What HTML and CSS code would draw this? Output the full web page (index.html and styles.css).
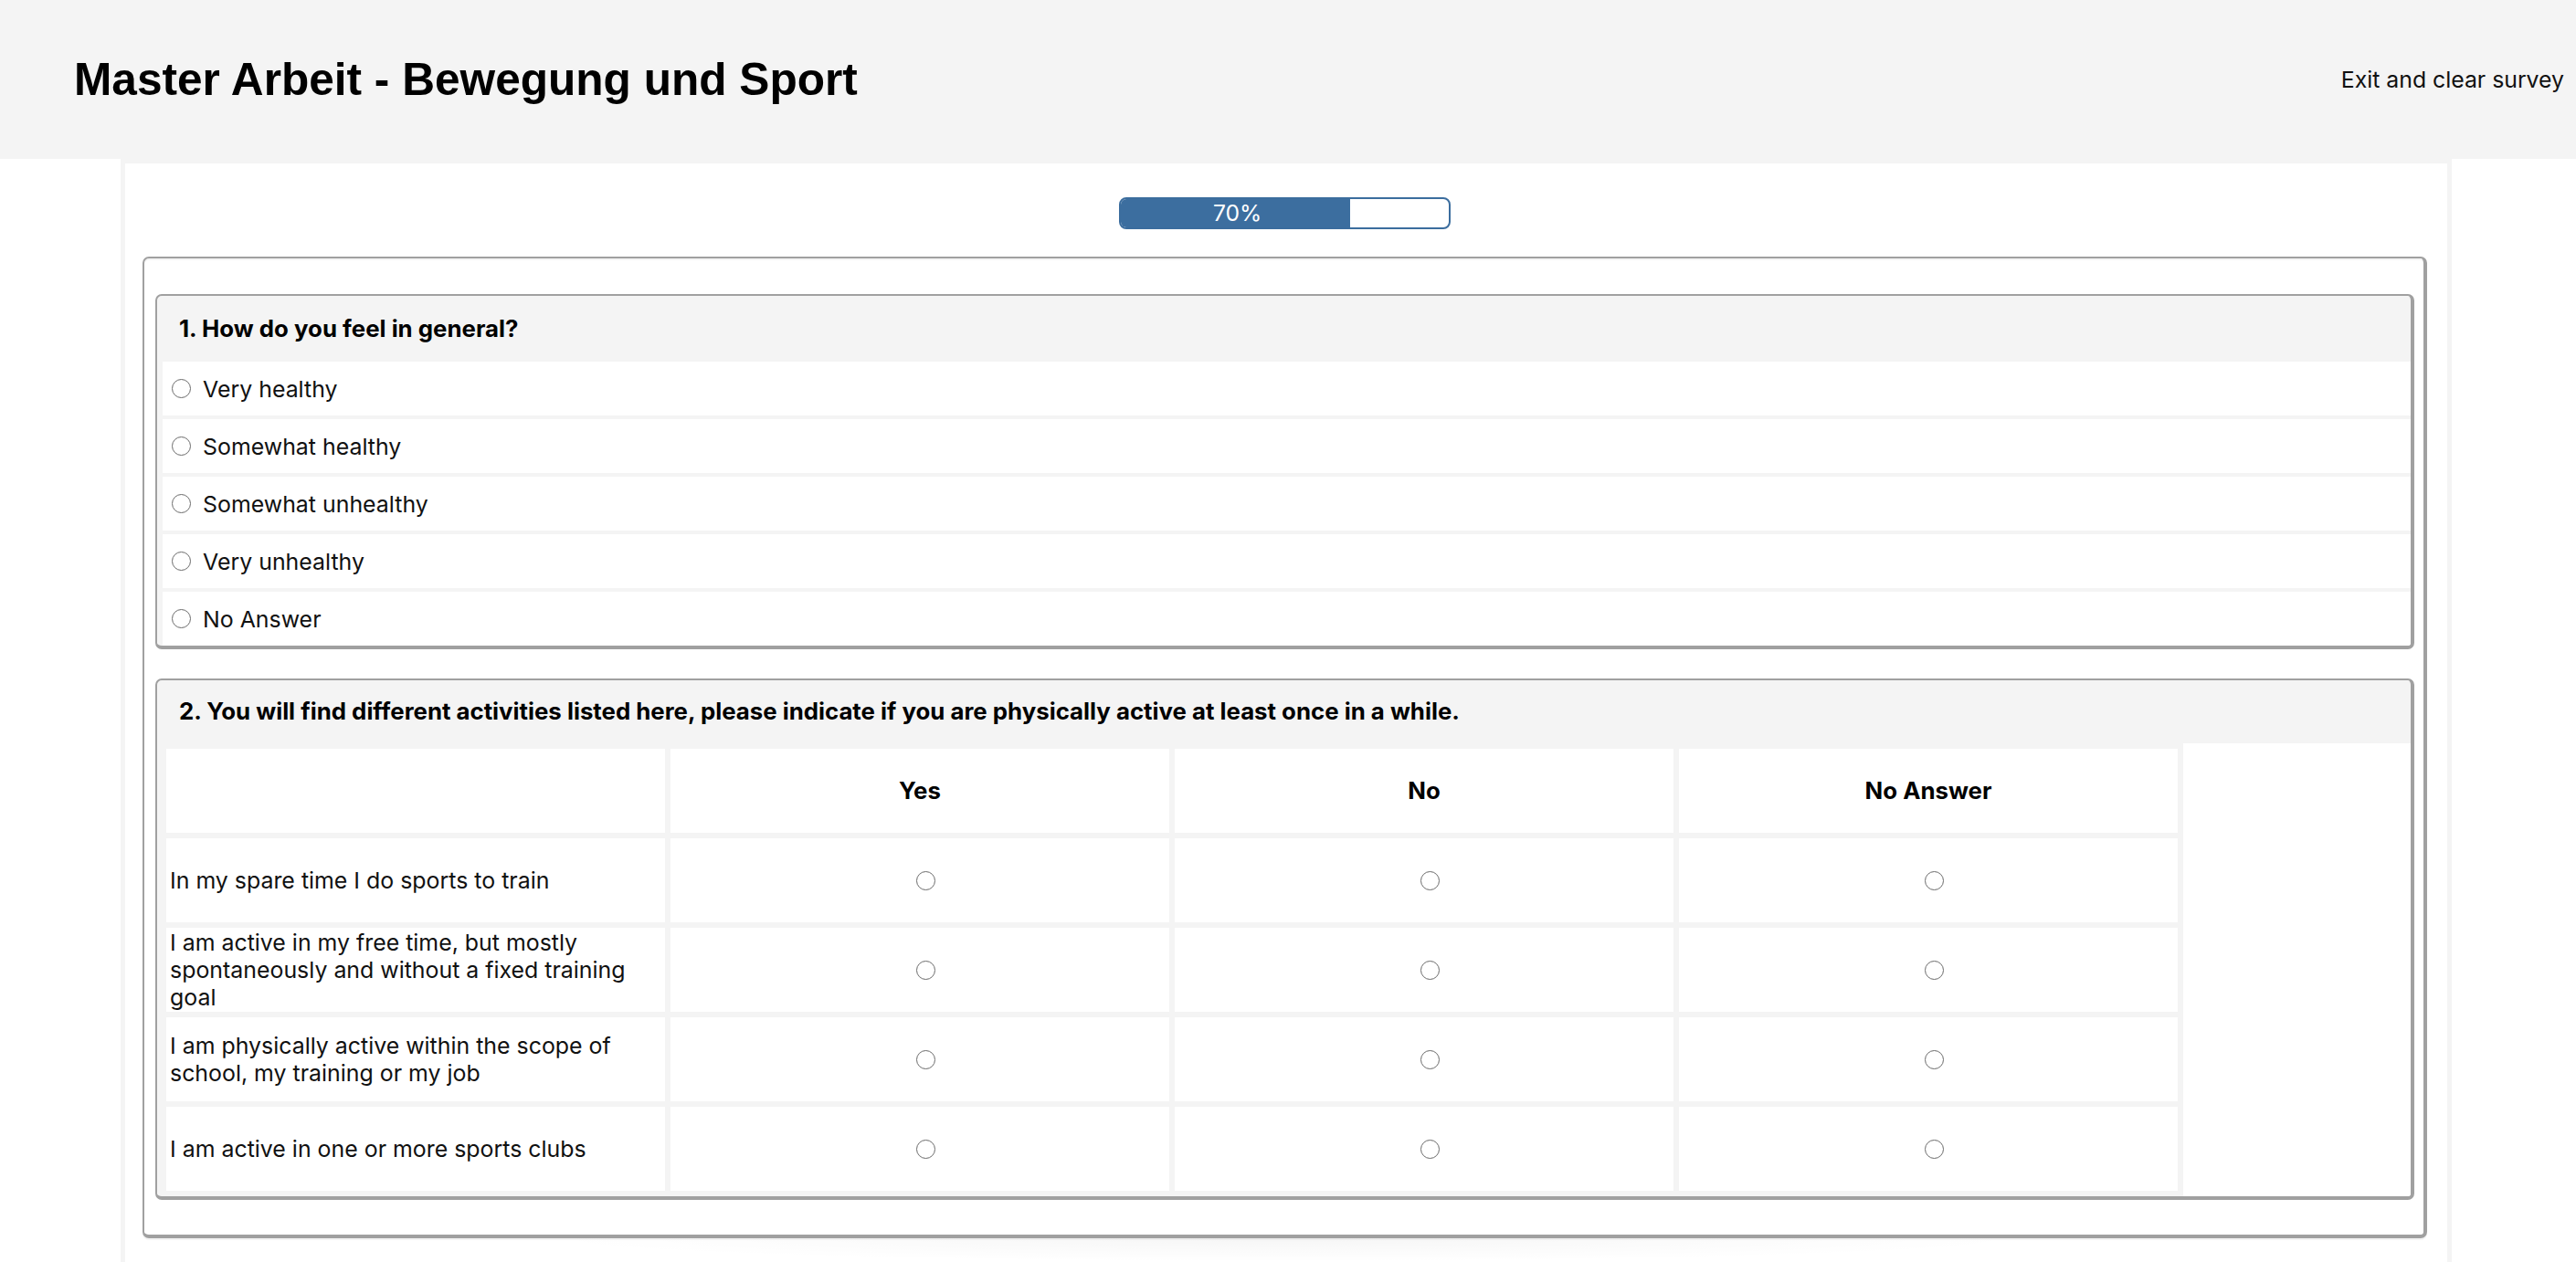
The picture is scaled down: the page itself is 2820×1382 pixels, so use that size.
FILE: index.html
```html
<!DOCTYPE html>
<html lang="en">
<head>
<meta charset="utf-8">
<title>Master Arbeit - Bewegung und Sport</title>
<link rel="stylesheet" href="styles.css">
</head>
<body>
<header class="topbar">
  <h1 class="site-title">Master Arbeit - Bewegung und Sport</h1>
  <a class="exit-link" href="#">Exit and clear survey</a>
</header>
<main class="container">
  <div class="progress">
    <div class="progress-fill" style="width:70%">70%</div>
  </div>
  <div class="survey-panel">
    <section class="question">
      <h2 class="q-title">1. How do you feel in general?</h2>
      <div class="options">
        <label class="option"><input type="radio" name="q1" class="radio"><span>Very healthy</span></label>
        <label class="option"><input type="radio" name="q1" class="radio"><span>Somewhat healthy</span></label>
        <label class="option"><input type="radio" name="q1" class="radio"><span>Somewhat unhealthy</span></label>
        <label class="option"><input type="radio" name="q1" class="radio"><span>Very unhealthy</span></label>
        <label class="option"><input type="radio" name="q1" class="radio"><span>No Answer</span></label>
      </div>
    </section>
    <section class="question q-matrix">
      <h2 class="q-title">2. You will find different activities listed here, please indicate if you are physically active at least once in a while.</h2>
      <div class="q-body">
        <div class="matrix">
          <div class="cell head"></div>
          <div class="cell head center">Yes</div>
          <div class="cell head center">No</div>
          <div class="cell head center">No Answer</div>

          <div class="cell label">In my spare time I do sports to train</div>
          <div class="cell center"><input type="radio" name="r1" class="radio mradio"></div>
          <div class="cell center"><input type="radio" name="r1" class="radio mradio"></div>
          <div class="cell center"><input type="radio" name="r1" class="radio mradio"></div>

          <div class="cell label">I am active in my free time, but mostly spontaneously and without a fixed training goal</div>
          <div class="cell center"><input type="radio" name="r2" class="radio mradio"></div>
          <div class="cell center"><input type="radio" name="r2" class="radio mradio"></div>
          <div class="cell center"><input type="radio" name="r2" class="radio mradio"></div>

          <div class="cell label">I am physically active within the scope of school, my training or my job</div>
          <div class="cell center"><input type="radio" name="r3" class="radio mradio"></div>
          <div class="cell center"><input type="radio" name="r3" class="radio mradio"></div>
          <div class="cell center"><input type="radio" name="r3" class="radio mradio"></div>

          <div class="cell label">I am active in one or more sports clubs</div>
          <div class="cell center"><input type="radio" name="r4" class="radio mradio"></div>
          <div class="cell center"><input type="radio" name="r4" class="radio mradio"></div>
          <div class="cell center"><input type="radio" name="r4" class="radio mradio"></div>
        </div>
      </div>
    </section>
  </div>
  <div class="bottom-glow"></div>
</main>
</body>
</html>
```

FILE: styles.css
```css
* { box-sizing: border-box; }

html, body {
  margin: 0;
  padding: 0;
  background: #ffffff;
}

body {
  font-family: Inter, "Noto Sans", "Liberation Sans", sans-serif;
  font-size: 24.9px;
  color: #111111;
}

.topbar {
  height: 174px;
  background: #f4f4f4;
  display: flex;
  align-items: center;
  justify-content: space-between;
  padding: 0 13px 0 81px;
}

.site-title {
  margin: 0;
  font-family: "Liberation Sans", Arial, sans-serif;
  font-weight: 700;
  font-size: 49.6px;
  color: #000000;
}

.exit-link {
  color: #111111;
  text-decoration: none;
  font-size: 24.8px;
}

.container {
  width: 2552px;
  margin: 0 0 0 132px;
  border: 5px solid #f4f4f4;
  border-bottom: 0;
  padding: 37px 22px 0 19px;
  background: #ffffff;
}

.progress {
  width: 363px;
  height: 35px;
  margin: 0 auto;
  border: 2px solid #3b6d9e;
  border-radius: 8px;
  overflow: hidden;
  background: #ffffff;
}

.progress-fill {
  height: 100%;
  background: #3c6e9f;
  color: #ffffff;
  font-size: 24.7px;
  line-height: 31px;
  text-align: center;
  padding-left: 4px;
}

.survey-panel {
  margin-top: 30px;
  border: 2px solid #a0a0a0;
  border-right-width: 4px;
  border-bottom-width: 4px;
  border-radius: 7px;
  padding: 39px 10px 38px 12px;
  box-shadow: inset 0 2px 0 #f4f4f4, 0 2px 0 #f4f4f4;
}

.question {
  background: #f4f4f4;
  border: 2px solid #a0a0a0;
  border-right-width: 4px;
  border-bottom-width: 4px;
  border-radius: 7px;
  overflow: hidden;
}

.question + .question {
  margin-top: 32px;
}

.q-title {
  margin: 0;
  font-size: 25.8px;
  font-weight: 700;
  line-height: 30px;
  padding: 21px 24px 21px 24px;
  color: #000000;
}

.q-matrix .q-title {
  padding-top: 19px;
  padding-bottom: 20px;
}

.options {
  display: flex;
  flex-direction: column;
  gap: 4px;
  padding-left: 6px;
}

.option {
  height: 59px;
  background: #ffffff;
  display: flex;
  align-items: center;
  padding-left: 10px;
  gap: 13px;
}

.radio {
  -webkit-appearance: none;
  appearance: none;
  width: 21px;
  height: 21px;
  margin: 0;
  border: 1.8px solid #6a6a6a;
  border-radius: 50%;
  background: #ffffff;
  flex: none;
}

.q-body {
  margin-left: 6px;
  background: #ffffff;
}

.matrix {
  display: inline-grid;
  grid-template-columns: repeat(4, 546px);
  grid-auto-rows: 92px;
  gap: 6px;
  padding: 6px 6px 6px 4px;
  background: #f4f4f4;
  vertical-align: top;
}

.cell {
  background: #ffffff;
  display: flex;
  align-items: center;
  line-height: 30px;
}

.cell.center {
  justify-content: center;
}

.cell.head {
  font-weight: 700;
  font-size: 25.8px;
  color: #000000;
}

.cell.label {
  padding: 0 30px 0 4px;
}

.mradio {
  margin-left: 12px;
}

.bottom-glow {
  height: 26px;
  margin: 0 420px;
  background: radial-gradient(ellipse at top, rgba(0, 0, 0, 0.035), rgba(0, 0, 0, 0) 70%);
}
```
